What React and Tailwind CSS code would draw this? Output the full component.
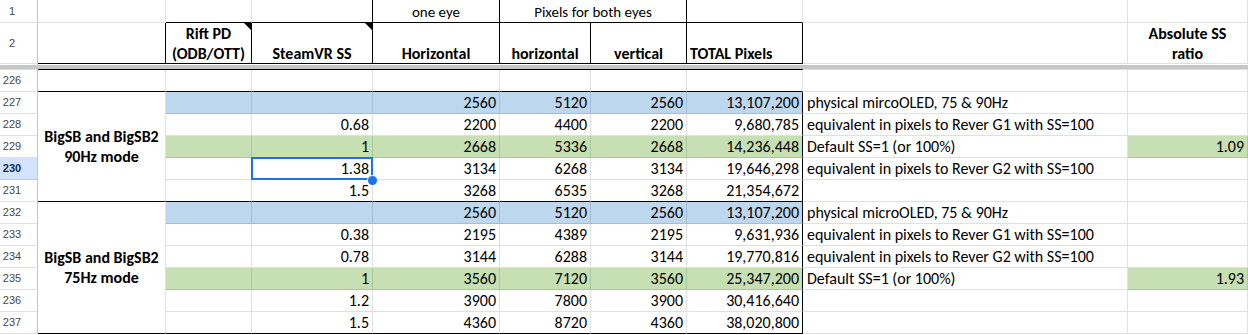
import React from 'react';

// --- Sheet data ---
const rows = [
    { n: 227, fill: 'blue', c: '', d: '2560', e: '5120', f: '2560', g: '13,107,200', h: 'physical mircoOLED, 75 & 90Hz' },
    { n: 228, c: '0.68', d: '2200', e: '4400', f: '2200', g: '9,680,785', h: 'equivalent in pixels to Rever G1 with SS=100' },
    { n: 229, fill: 'green', c: '1', d: '2668', e: '5336', f: '2668', g: '14,236,448', h: 'Default SS=1 (or 100%)', i: '1.09' },
    { n: 230, c: '1.38', d: '3134', e: '6268', f: '3134', g: '19,646,298', h: 'equivalent in pixels to Rever G2 with SS=100', selected: true },
    { n: 231, c: '1.5', d: '3268', e: '6535', f: '3268', g: '21,354,672', h: '', groupEnd: true },
    { n: 232, fill: 'blue', c: '', d: '2560', e: '5120', f: '2560', g: '13,107,200', h: 'physical microOLED, 75 & 90Hz' },
    { n: 233, c: '0.38', d: '2195', e: '4389', f: '2195', g: '9,631,936', h: 'equivalent in pixels to Rever G1 with SS=100' },
    { n: 234, c: '0.78', d: '3144', e: '6288', f: '3144', g: '19,770,816', h: 'equivalent in pixels to Rever G2 with SS=100' },
    { n: 235, fill: 'green', c: '1', d: '3560', e: '7120', f: '3560', g: '25,347,200', h: 'Default SS=1 (or 100%)', i: '1.93' },
    { n: 236, c: '1.2', d: '3900', e: '7800', f: '3900', g: '30,416,640', h: '' },
    { n: 237, c: '1.5', d: '4360', e: '8720', f: '4360', g: '38,020,800', h: '', groupEnd: true },
];

const fills = { blue: 'bg-[#bdd7ee]', green: 'bg-[#c6e0b4]' };

const GR = 'border-r-black/[0.12]';
const GB = 'border-b-black/[0.12]';

function Cell({ r = GR, b = GB, className = '', children }) {
    return (
        <div className={`relative border-r border-b overflow-visible ${r} ${b} ${className}`}>
            {children}
        </div>
    );
}

function RowHead({ n, active, className = '' }) {
    return (
        <div className={`flex items-center border-r border-b border-r-[#c4c7c5] border-b-black/[0.12] text-[11px] font-['Liberation_Sans',Arial,sans-serif] ${active ? 'bg-[#d3e3fd] text-[#0b2a5c] font-bold' : 'bg-white text-[#444746]'} ${className}`}>
            <span className="w-[24px] text-center">{n}</span>
        </div>
    );
}

function Num({ children }) {
    return <div className="h-full flex items-end justify-end pr-[3px] leading-[20px]">{children}</div>;
}

function NoteMark() {
    return <div className="absolute top-0 right-0 w-0 h-0 border-t-[7px] border-l-[7px] border-t-black border-l-transparent" />;
}

export default function App() {
    return (
        <main className="w-[1248px] h-[335px] bg-white overflow-hidden text-[16px] text-black font-['Carlito','Lato',sans-serif]">
            <div className="grid grid-cols-[38px_128px_86px_121px_127px_91px_96px_116px_325px_120px] grid-rows-[23px_41px_6px_repeat(12,22px)]">

                {/* --- Row 1 --- */}
                <RowHead n={1} />
                <Cell />
                <Cell b="border-b-black" />
                <Cell r="border-r-black" b="border-b-black" />
                <Cell r="border-r-black" b="border-b-black">
                    <div className="h-full flex items-end justify-center text-[15px] leading-[20px]">one eye</div>
                </Cell>
                <Cell r="border-r-black" b="border-b-black" className="col-span-2">
                    <div className="h-full flex items-end justify-center text-[15px] leading-[20px]">Pixels for both eyes</div>
                </Cell>
                <Cell b="border-b-black" />
                <Cell />
                <Cell />

                {/* --- Row 2 (headers) --- */}
                <RowHead n={2} />
                <Cell r="border-r-black" b="border-b-black" />
                <Cell r="border-r-black" b="border-b-black">
                    <NoteMark />
                    <div className="h-full flex flex-col items-center justify-end font-bold leading-[20px] translate-y-[1px]">
                        <span>Rift PD</span>
                        <span>(ODB/OTT)</span>
                    </div>
                </Cell>
                <Cell r="border-r-black" b="border-b-black">
                    <NoteMark />
                    <div className="h-full flex items-end justify-center font-bold leading-[20px] translate-y-[1px]">SteamVR SS</div>
                </Cell>
                <Cell r="border-r-black" b="border-b-black">
                    <div className="h-full flex items-end justify-center font-bold leading-[20px] translate-y-[1px]">Horizontal</div>
                </Cell>
                <Cell r="border-r-black" b="border-b-black">
                    <div className="h-full flex items-end justify-center font-bold leading-[20px] translate-y-[1px]">horizontal</div>
                </Cell>
                <Cell r="border-r-black" b="border-b-black">
                    <div className="h-full flex items-end justify-center font-bold leading-[20px] translate-y-[1px]">vertical</div>
                </Cell>
                <Cell r="border-r-black" b="border-b-black">
                    <div className="h-full flex items-end pl-[3px] font-bold leading-[20px] translate-y-[1px]">TOTAL Pixels</div>
                </Cell>
                <Cell />
                <Cell>
                    <div className="h-full flex flex-col items-center justify-end font-bold leading-[20px] translate-y-[1px]">
                        <span>Absolute SS</span>
                        <span>ratio</span>
                    </div>
                </Cell>

                {/* --- Frozen rows divider --- */}
                <div className="border-b border-b-black/[0.12] border-r border-r-[#c4c7c5] pt-px"><div className="h-[4px] bg-[#c4c7c5]" /></div>
                <div className="col-span-7 border-b border-b-black pt-px"><div className="h-[4px] bg-[#c4c7c5]" /></div>
                <div className="col-span-2 border-b border-b-black/[0.12] pt-px"><div className="h-[4px] bg-[#c4c7c5]" /></div>

                {/* --- Row 226 --- */}
                <RowHead n={226} />
                <Cell b="border-b-black" />
                <Cell b="border-b-black" />
                <Cell b="border-b-black" />
                <Cell b="border-b-black" />
                <Cell b="border-b-black" />
                <Cell b="border-b-black" />
                <Cell b="border-b-black" />
                <Cell />
                <Cell />

                {/* --- Data rows --- */}
                {rows.map((row, idx) => {
                    const fill = row.fill ? fills[row.fill] : 'bg-white';
                    const bb = row.groupEnd ? 'border-b-black' : GB;
                    return (
                        <React.Fragment key={row.n}>
                            <RowHead n={row.n} active={row.selected} />
                            {idx === 0 && (
                                <Cell b="border-b-black" className="row-span-5">
                                    <div className="h-full flex flex-col items-center justify-center font-bold leading-[20px]">
                                        <span>BigSB and BigSB2</span>
                                        <span>90Hz mode</span>
                                    </div>
                                </Cell>
                            )}
                            {idx === 5 && (
                                <Cell b="border-b-black" className="row-span-6">
                                    <div className="h-full flex flex-col items-center justify-center font-bold leading-[20px]">
                                        <span>BigSB and BigSB2</span>
                                        <span>75Hz mode</span>
                                    </div>
                                </Cell>
                            )}
                            <Cell b={bb} className={fill} />
                            <Cell b={bb} className={fill}>
                                <Num>{row.c}</Num>
                                {row.selected && (
                                    <>
                                        <div className="absolute -top-px -left-px w-[122px] h-[23px] border-2 border-[#1a73e8]" />
                                        <div className="absolute -right-[6px] -bottom-[7px] w-[11px] h-[11px] rounded-full bg-[#1a73e8] border border-white z-10" />
                                    </>
                                )}
                            </Cell>
                            <Cell b={bb} className={fill}><Num>{row.d}</Num></Cell>
                            <Cell b={bb} className={fill}><Num>{row.e}</Num></Cell>
                            <Cell b={bb} className={fill}><Num>{row.f}</Num></Cell>
                            <Cell r="border-r-black" b={bb} className={fill}><Num>{row.g}</Num></Cell>
                            <Cell>
                                <div className="h-full flex items-end pl-[4px] leading-[20px] whitespace-nowrap">{row.h}</div>
                            </Cell>
                            <Cell className={row.i ? fills.green : 'bg-white'}>
                                <Num>{row.i}</Num>
                            </Cell>
                        </React.Fragment>
                    );
                })}
            </div>
        </main>
    );
}
